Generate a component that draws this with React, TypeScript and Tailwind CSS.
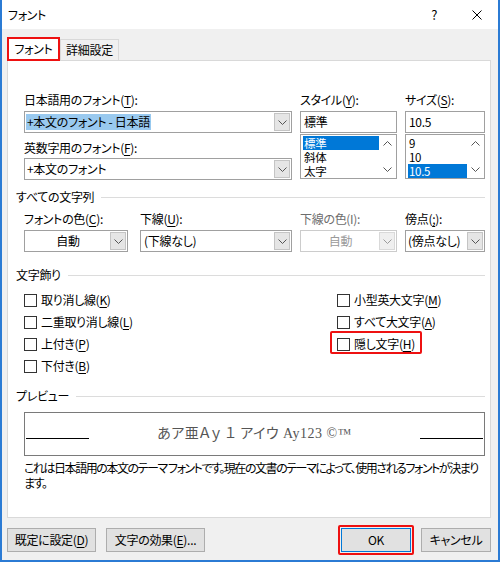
import React from 'react';

const FONT = "font-['Noto_Sans_CJK_JP','Noto_Sans',sans-serif] [font-feature-settings:'palt']";

function Chevron({ up = false, color = '#555555' }: { up?: boolean; color?: string }) {
  return (
    <svg width="9" height="5" viewBox="0 0 9 5">
      <polyline
        points={up ? '0.5,4.5 4.5,0.5 8.5,4.5' : '0.5,0.5 4.5,4.5 8.5,0.5'}
        fill="none"
        stroke={color}
        strokeWidth="1"
      />
    </svg>
  );
}

function M({ c }: { c: string }) {
  return <span className="underline underline-offset-[2px]">{c}</span>;
}

function Combo({
  children,
  className = '',
  disabled = false,
  center = false,
}: {
  children: React.ReactNode;
  className?: string;
  disabled?: boolean;
  center?: boolean;
}) {
  return (
    <div
      className={`flex h-[22px] bg-white border ${
        disabled ? 'border-[#cccccc] text-[#9a9a9a]' : 'border-[#a0a0a0]'
      } ${className}`}
    >
      <div className={`flex-1 flex items-center pl-[1px] ${center ? 'justify-center' : ''}`}>{children}</div>
      <div
        className={`w-[16px] my-[1px] mr-[1px] flex items-center justify-center border ${
          disabled ? 'bg-[#efefef] border-[#d9d9d9]' : 'bg-[#e5e5e5] border-[#c4c4c4]'
        }`}
      >
        <Chevron color={disabled ? '#9a9a9a' : '#555555'} />
      </div>
    </div>
  );
}

function ListBox({ items, selected }: { items: string[]; selected: string }) {
  return (
    <div className="mt-[1px] h-[45px] border border-[#a0a0a0] bg-white flex">
      <div className="flex-1 pt-[1px] pl-[2px]">
        {items.map((it) => (
          <div
            key={it}
            className={`h-[14px] leading-[14px] text-[11.5px] pl-[1px] overflow-hidden ${
              it === selected ? 'bg-[#0078d7] text-white' : ''
            }`}
          >
            {it}
          </div>
        ))}
      </div>
      <div className="w-[17px] flex flex-col justify-between items-center py-[6px]">
        <Chevron up />
        <Chevron />
      </div>
    </div>
  );
}

function Section({ title }: { title: string }) {
  return (
    <div className="flex items-center h-[16px]">
      <span>{title}</span>
      <div className="flex-1 h-[1px] bg-[#dcdcdc] ml-[7px]" />
    </div>
  );
}

function Check({ children }: { children: React.ReactNode }) {
  return (
    <div className="flex items-center h-[22px]">
      <div className="w-[13px] h-[13px] border border-[#333333] bg-white" />
      <span className="ml-[4px]">{children}</span>
    </div>
  );
}

export default function App() {
  return (
    <div
      className={`w-[500px] h-[562px] flex flex-col bg-[#f0f0f0] border-x-2 border-b-2 border-[#2b7bd4] text-[12px] leading-[16px] tracking-[-0.3px] text-black ${FONT}`}
    >
      {/* title bar */}
      <div className="h-[29px] shrink-0 bg-white flex items-center pl-[6px] pr-[16px]">
        <span className="flex-1">フォント</span>
        <span className="mr-[35px] text-[13px]">?</span>
        <svg width="10" height="10" viewBox="0 0 10 10">
          <path d="M0.5 0.5 L9.5 9.5 M9.5 0.5 L0.5 9.5" stroke="#000" strokeWidth="1" />
        </svg>
      </div>

      {/* tabs */}
      <div className="h-[31px] shrink-0 flex items-end pl-[5px]">
        <div className="relative z-10 -mb-[1px] w-[53px] h-[24px] bg-white border-2 border-[#ee1111] flex items-center justify-center">
          フォント
        </div>
        <div className="w-[59px] h-[21px] bg-[#f0f0f0] border border-b-0 border-[#d9d9d9] flex items-center justify-center">
          詳細設定
        </div>
      </div>

      {/* panel */}
      <div className="ml-[5px] w-[484px] h-[458px] shrink-0 bg-white border border-[#d9d9d9] pt-[31px] pl-[8px] pr-[5px]">
        <div className="flex ml-[8px]">
          <div className="w-[268px]">
            <div>
              日本語用のフォント(<M c="T" />):
            </div>
            <Combo className="mt-[3px]">
              <span className="bg-[#99c9ef] px-[1px]">+本文のフォント - 日本語</span>
            </Combo>
            <div className="mt-[7px]">
              英数字用のフォント(<M c="F" />):
            </div>
            <Combo className="mt-[2px]">
              <span className="px-[1px]">+本文のフォント</span>
            </Combo>
          </div>
          <div className="w-[97px] ml-[8px]">
            <div>
              スタイル(<M c="Y" />):
            </div>
            <div className="mt-[3px] h-[22px] border border-[#a0a0a0] bg-white flex items-center pl-[3px]">標準</div>
            <ListBox items={['標準', '斜体', '太字']} selected="標準" />
          </div>
          <div className="w-[80px] ml-[8px]">
            <div>
              サイズ(<M c="S" />):
            </div>
            <div className="mt-[3px] h-[22px] border border-[#a0a0a0] bg-white flex items-center pl-[3px]">10.5</div>
            <ListBox items={['9', '10', '10.5']} selected="10.5" />
          </div>
        </div>

        <div className="mt-[9px]">
          <Section title="すべての文字列" />
        </div>

        <div className="flex ml-[8px] mt-[6px]">
          <div className="w-[104px]">
            <div>
              フォントの色(<M c="C" />):
            </div>
            <Combo className="mt-[3px]" center>
              自動
            </Combo>
          </div>
          <div className="w-[152px] ml-[12px]">
            <div>
              下線(<M c="U" />):
            </div>
            <Combo className="mt-[3px]">
              <span className="pl-[2px]">(下線なし)</span>
            </Combo>
          </div>
          <div className="w-[97px] ml-[8px]">
            <div className="text-[#6d6d6d]">下線の色(I):</div>
            <Combo className="mt-[3px]" disabled center>
              自動
            </Combo>
          </div>
          <div className="w-[80px] ml-[8px]">
            <div>
              傍点(<M c=";" />):
            </div>
            <Combo className="mt-[3px]">
              <span className="pl-[1px]">(傍点なし)</span>
            </Combo>
          </div>
        </div>

        <div className="mt-[15px]">
          <Section title="文字飾り" />
        </div>

        <div className="flex ml-[8px] mt-[6px]">
          <div className="w-[313px] flex flex-col">
            <Check>
              取り消し線(<M c="K" />)
            </Check>
            <Check>
              二重取り消し線(<M c="L" />)
            </Check>
            <Check>
              上付き(<M c="P" />)
            </Check>
            <Check>
              下付き(<M c="B" />)
            </Check>
          </div>
          <div className="flex flex-col">
            <Check>
              小型英大文字(<M c="M" />)
            </Check>
            <Check>
              すべて大文字(<M c="A" />)
            </Check>
            <div className="relative">
              <Check>
                隠し文字(<M c="H" />)
              </Check>
              <span className="absolute left-[-7px] top-[-2px] w-[92px] h-[23px] border-2 border-[#ee1111] rounded-[2px]" />
            </div>
          </div>
        </div>

        <div className="mt-[11px]">
          <Section title="プレビュー" />
        </div>

        <div className="ml-[8px] mt-[8px] w-[461px] h-[44px] border border-[#7a7a7a] flex items-center px-[1px]">
          <div className="w-[63px] h-[1px] bg-black mt-[8px]" />
          <div className="flex-1 text-center text-[14px] text-[#555555] font-['Liberation_Serif','Noto_Sans_CJK_JP',serif] tracking-[0.5px]">
            あア亜Ａｙ １ アイウ Ay123 ©™
          </div>
          <div className="w-[63px] h-[1px] bg-black mt-[8px]" />
        </div>

        <div className="ml-[8px] mt-[4px] leading-[15px] whitespace-nowrap tracking-[-1.45px]">
          <div>これは日本語用の本文のテーマ フォントです。現在の文書のテーマによって、使用されるフォントが決まり</div>
          <div>ます。</div>
        </div>
      </div>

      {/* buttons */}
      <div className="flex mt-[10px] pl-[5px] pr-[7px] h-[24px]">
        <button className="w-[89px] h-[24px] bg-[#e1e1e1] border border-[#adadad]">
          既定に設定(<M c="D" />)
        </button>
        <button className="ml-[10px] w-[99px] h-[24px] bg-[#e1e1e1] border border-[#adadad]">
          文字の効果(<M c="E" />)...
        </button>
        <div className="flex-1" />
        <div className="relative">
          <button className="w-[70px] h-[24px] bg-[#e1e1e1] border border-[#0078d7]">OK</button>
          <span className="absolute -inset-[3px] border-2 border-[#ee1111] rounded-[2px]" />
        </div>
        <button className="ml-[10px] w-[70px] h-[24px] bg-[#e1e1e1] border border-[#adadad]">キャンセル</button>
      </div>
    </div>
  );
}
